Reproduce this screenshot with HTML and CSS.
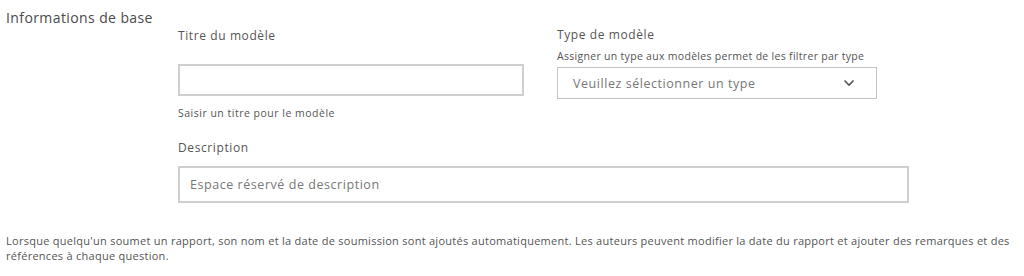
FILE: index.html
```html
<!DOCTYPE html>
<html lang="fr">
<head>
<meta charset="utf-8">
<title>Informations de base</title>
<link rel="stylesheet" href="styles.css">
</head>
<body>
<div class="page">
  <h2 class="section-title">Informations de base</h2>
  <div class="form">
    <div class="row">
      <div class="field field-title">
        <label class="label">Titre du modèle</label>
        <div class="input input-title"></div>
        <div class="hint hint-below">Saisir un titre pour le modèle</div>
      </div>
      <div class="field field-type">
        <label class="label">Type de modèle</label>
        <div class="hint hint-above">Assigner un type aux modèles permet de les filtrer par type</div>
        <div class="select">
          <span class="placeholder">Veuillez sélectionner un type</span>
          <svg class="chevron" width="12" height="8" viewBox="0 0 12 8"><path d="M1.5 1.5 L6 6 L10.5 1.5" fill="none" stroke="#555" stroke-width="1.6"/></svg>
        </div>
      </div>
    </div>
    <div class="field field-desc">
      <label class="label">Description</label>
      <div class="input input-desc"><span class="placeholder">Espace réservé de description</span></div>
    </div>
  </div>
  <p class="footnote">Lorsque quelqu'un soumet un rapport, son nom et la date de soumission sont ajoutés automatiquement. Les auteurs peuvent modifier la date du rapport et ajouter des remarques et des références à chaque question.</p>
</div>
</body>
</html>
```
FILE: styles.css
```css
html, body {
  margin: 0;
  padding: 0;
  background: #ffffff;
}
body {
  font-family: "Open Sans", "Noto Sans", sans-serif;
  color: #555555;
}
.page {
  padding: 9px 6px 0 6px;
}
.section-title {
  margin: 0;
  font-size: 14px;
  letter-spacing: 0.4px;
  font-weight: 400;
  line-height: 18px;
  color: #4a4a4a;
}
.form {
  margin-left: 172px;
}
.row {
  display: grid;
  grid-template-columns: 346px 320px;
  column-gap: 33px;
  align-items: start;
}
.field {
  display: flex;
  flex-direction: column;
}
.field-title {
  margin-top: 1px;
}
.label {
  font-size: 12px;
  letter-spacing: 0.6px;
  line-height: 16px;
  color: #555555;
}
.hint {
  font-size: 10.5px;
  letter-spacing: 0.5px;
  line-height: 14px;
  color: #555555;
  white-space: nowrap;
}
.input {
  box-sizing: border-box;
  border: 2px solid #cfcfcf;
  background: #fff;
}
.input-title {
  height: 32px;
  margin-top: 20px;
}
.hint-below {
  margin-top: 10px;
}
.hint-above {
  margin-top: 6px;
  letter-spacing: 0.3px;
}
.select {
  box-sizing: border-box;
  height: 32px;
  margin-top: 4px;
  border: 1.5px solid #c4c4c4;
  display: flex;
  align-items: center;
  justify-content: space-between;
  padding: 0 21px 0 15px;
}
.placeholder {
  font-size: 12.5px;
  letter-spacing: 0.55px;
  color: #777777;
}
.field-desc {
  margin-top: 20px;
  width: 731px;
}
.input-desc {
  height: 37px;
  margin-top: 10px;
  display: flex;
  align-items: center;
  padding-left: 10px;
}
.footnote {
  margin: 30px 0 0 0;
  max-width: 1014px;
  font-size: 11px;
  letter-spacing: 0.27px;
  line-height: 15px;
  color: #555555;
}
```
